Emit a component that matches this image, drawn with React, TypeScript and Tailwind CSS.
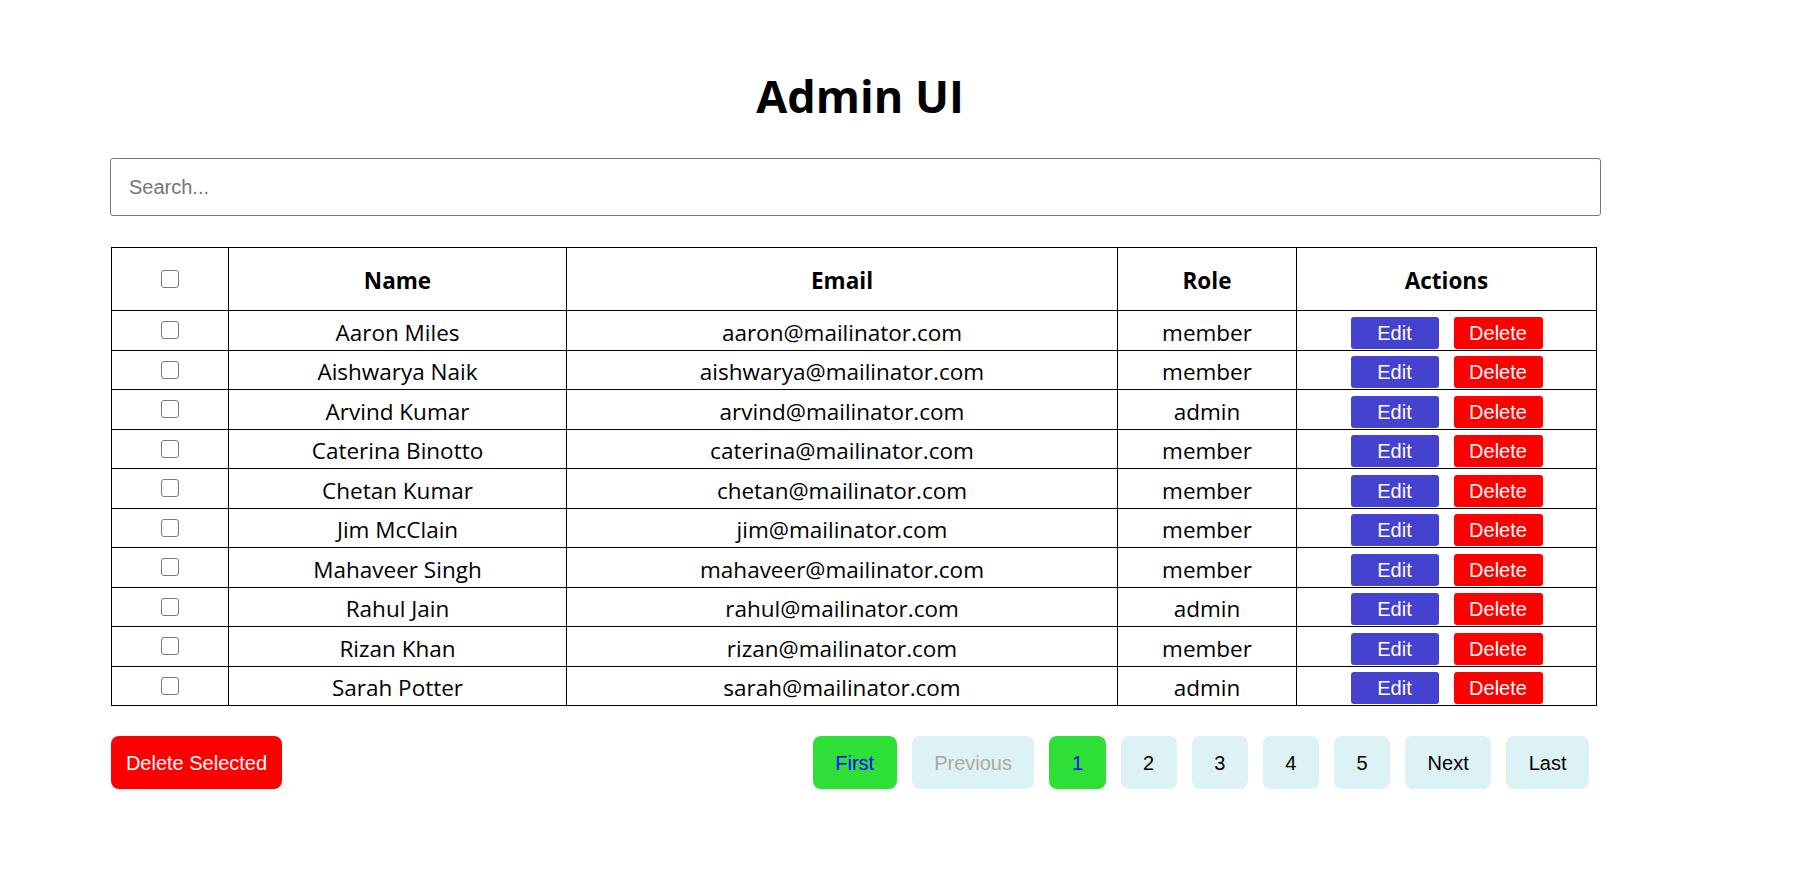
import React from 'react';

type User = { name: string; email: string; role: string };

const users: User[] = [
  { name: 'Aaron Miles', email: 'aaron@mailinator.com', role: 'member' },
  { name: 'Aishwarya Naik', email: 'aishwarya@mailinator.com', role: 'member' },
  { name: 'Arvind Kumar', email: 'arvind@mailinator.com', role: 'admin' },
  { name: 'Caterina Binotto', email: 'caterina@mailinator.com', role: 'member' },
  { name: 'Chetan Kumar', email: 'chetan@mailinator.com', role: 'member' },
  { name: 'Jim McClain', email: 'jim@mailinator.com', role: 'member' },
  { name: 'Mahaveer Singh', email: 'mahaveer@mailinator.com', role: 'member' },
  { name: 'Rahul Jain', email: 'rahul@mailinator.com', role: 'admin' },
  { name: 'Rizan Khan', email: 'rizan@mailinator.com', role: 'member' },
  { name: 'Sarah Potter', email: 'sarah@mailinator.com', role: 'admin' },
];

const Checkbox: React.FC = () => (
  <input
    type="checkbox"
    className="appearance-none w-[18px] h-[18px] border-[1.5px] border-[#7a7a7a] rounded-[3px] bg-white align-middle block mx-auto"
  />
);

const PageButton: React.FC<{ label: string; variant?: 'active' | 'disabled' | 'normal' }> = ({
  label,
  variant = 'normal',
}) => {
  const styles = {
    active: 'bg-[#2edf38] text-[#0000ff]',
    disabled: 'bg-[#ddf2f4] text-[#a9a9a9]',
    normal: 'bg-[#ddf2f4] text-black',
  };
  return (
    <button className={`h-[53px] px-[22.5px] rounded-[8px] text-[20px] ${styles[variant]}`}>{label}</button>
  );
};

const App: React.FC = () => {
  return (
    <div className="min-h-screen bg-white font-['Open_Sans',sans-serif] text-black">
      <div className="ml-[110px] w-[1491px] pt-[66px]">
        <h1 className="text-center text-[45px] leading-[60px] font-bold pl-[9px]">Admin UI</h1>

        <input
          type="text"
          placeholder="Search..."
          className="mt-[32px] block w-full h-[58px] border border-[#767676] rounded-[3px] px-[18px] text-[20px] font-['Liberation_Sans',Arial,sans-serif] placeholder:text-[#757575] outline-none"
        />

        <table className="mt-[31px] ml-px w-[1485px] border-collapse table-fixed text-[22.5px]">
          <colgroup>
            <col className="w-[117px]" />
            <col className="w-[338px]" />
            <col className="w-[551px]" />
            <col className="w-[179px]" />
            <col className="w-[300px]" />
          </colgroup>
          <thead>
            <tr className="h-[63px]">
              <th className="border border-black p-0">
                <Checkbox />
              </th>
              <th className="border border-black font-bold p-0 pt-[4px]">Name</th>
              <th className="border border-black font-bold p-0 pt-[4px]">Email</th>
              <th className="border border-black font-bold p-0 pt-[4px]">Role</th>
              <th className="border border-black font-bold p-0 pt-[4px]">Actions</th>
            </tr>
          </thead>
          <tbody>
            {users.map((u) => (
              <tr key={u.email} className="h-[39.5px]">
                <td className="border border-black p-0">
                  <Checkbox />
                </td>
                <td className="border border-black text-center p-0 pt-[4.5px]">{u.name}</td>
                <td className="border border-black text-center p-0 pt-[4.5px]">{u.email}</td>
                <td className="border border-black text-center p-0 pt-[4.5px]">{u.role}</td>
                <td className="border border-black p-0 pt-[4.5px]">
                  <div className="flex justify-center gap-[15px] font-['Liberation_Sans',Arial,sans-serif] text-[20px] text-white">
                    <button className="w-[88px] h-[32px] rounded-[3px] bg-[#4442cf]">Edit</button>
                    <button className="w-[89px] h-[32px] rounded-[3px] bg-[#ff0000]">Delete</button>
                  </div>
                </td>
              </tr>
            ))}
          </tbody>
        </table>

        <div className="mt-[30px] ml-px w-[1485px] pr-[7px] flex justify-between items-start font-['Liberation_Sans',Arial,sans-serif]">
          <button className="h-[53px] w-[171px] rounded-[8px] bg-[#ff0000] text-white text-[20px]">Delete Selected</button>
          <div className="flex gap-[15px]">
            <PageButton label="First" variant="active" />
            <PageButton label="Previous" variant="disabled" />
            <PageButton label="1" variant="active" />
            <PageButton label="2" />
            <PageButton label="3" />
            <PageButton label="4" />
            <PageButton label="5" />
            <PageButton label="Next" />
            <PageButton label="Last" />
          </div>
        </div>
      </div>
    </div>
  );
};

export default App;
